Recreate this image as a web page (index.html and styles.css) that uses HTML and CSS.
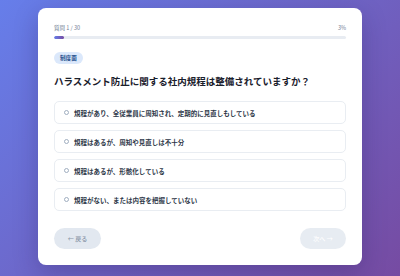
FILE: index.html
```html
<!DOCTYPE html>
<html lang="ja">
<head>
  <meta charset="UTF-8">
  <title>ハラスメント診断</title>
  <link rel="stylesheet" href="styles.css">
</head>
<body>
  <div class="card">
    <div class="progress-head">
      <span>質問 1 / 30</span>
      <span>3%</span>
    </div>
    <div class="progress-track">
      <div class="progress-fill" style="width: 3.33%"></div>
    </div>

    <span class="badge">制度面</span>
    <h2 class="question">ハラスメント防止に関する社内規程は整備されていますか？</h2>

    <div class="options">
      <label class="option"><span class="radio"></span>規程があり、全従業員に周知され、定期的に見直しもしている</label>
      <label class="option"><span class="radio"></span>規程はあるが、周知や見直しは不十分</label>
      <label class="option"><span class="radio"></span>規程はあるが、形骸化している</label>
      <label class="option"><span class="radio"></span>規程がない、または内容を把握していない</label>
    </div>

    <div class="nav">
      <button class="btn btn-back">← 戻る</button>
      <button class="btn btn-next" disabled>次へ →</button>
    </div>
  </div>
</body>
</html>
```

FILE: styles.css
```css
html, body {
  height: 100%;
}

body {
  margin: 0;
  padding: 8px 0 0;
  box-sizing: border-box;
  font-family: 'Noto Sans CJK JP', 'Noto Sans', sans-serif;
  background: linear-gradient(135deg, #667eea 0%, #764ba2 100%);
  color: #2d3748;
}

.card {
  width: 324px;
  margin: 0 auto;
  padding: 16px;
  box-sizing: border-box;
  background: #fff;
  border-radius: 8px;
  box-shadow: 0 8px 24px rgba(30, 20, 80, 0.25);
  display: flex;
  flex-direction: column;
  align-items: flex-start;
}

.progress-head {
  align-self: stretch;
  display: flex;
  justify-content: space-between;
  font-size: 5.5px;
  line-height: 8px;
  color: #718096;
}

.progress-track {
  align-self: stretch;
  height: 3px;
  margin-top: 4px;
  background: #e8ecf2;
  border-radius: 2px;
  overflow: hidden;
}

.progress-fill {
  height: 100%;
  background: linear-gradient(90deg, #667eea, #764ba2);
  border-radius: 2px;
}

.badge {
  margin-top: 13px;
  padding: 0 6px;
  height: 12px;
  line-height: 12px;
  font-size: 5.6px;
  font-weight: 700;
  color: #234e8c;
  background: #dbe8fb;
  border-radius: 6px;
}

.question {
  margin: 10px 0 0;
  font-size: 9.5px;
  line-height: 14px;
  font-weight: 700;
  color: #1a202c;
}

.options {
  align-self: stretch;
  margin-top: 13px;
  display: flex;
  flex-direction: column;
  gap: 6px;
}

.option {
  height: 23px;
  box-sizing: border-box;
  display: flex;
  align-items: center;
  gap: 5px;
  padding: 0 9px;
  font-size: 6.5px;
  font-weight: 700;
  color: #2d3748;
  border: 1px solid #e9edf2;
  border-radius: 5px;
}

.radio {
  width: 5px;
  height: 5px;
  box-sizing: border-box;
  border: 1px solid #a0aec0;
  border-radius: 50%;
}

.nav {
  align-self: stretch;
  margin-top: 17px;
  display: flex;
  justify-content: space-between;
}

.btn {
  height: 21px;
  border: none;
  border-radius: 11px;
  font-family: inherit;
  font-size: 6px;
  font-weight: 500;
  padding: 0;
}

.btn-back {
  width: 47px;
  background: #e2e8f0;
  color: #8a96a8;
}

.btn-next {
  width: 46px;
  background: #e2e8f0;
  color: #fff;
  opacity: 0.8;
}
```
